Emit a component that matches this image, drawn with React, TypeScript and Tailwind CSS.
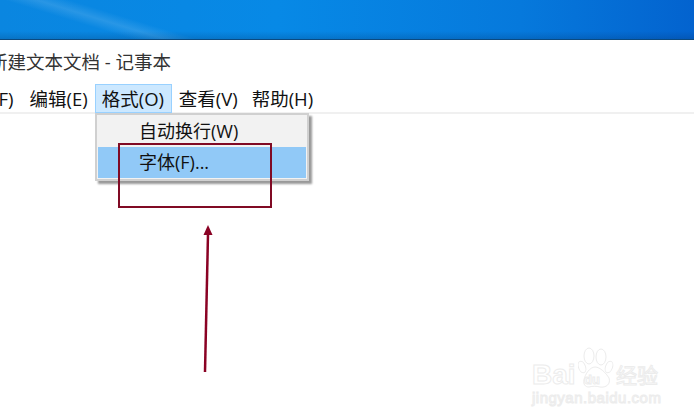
function Watermark() {
  return (
    <div className="absolute left-[532px] top-[345px] w-[126px] flex flex-col text-transparent [-webkit-text-stroke:1px_#ececec] font-['Liberation_Sans','Noto_Sans_CJK_SC',sans-serif]">
      <div className="flex items-end h-[44px]">
        <span className="text-[28px] leading-[28px] font-bold w-[46px]">Bai</span>
        <div className="relative w-[36px] h-[42px]">
          <svg width="36" height="42" viewBox="0 0 36 42" fill="none" stroke="#ececec" strokeWidth="1">
            <ellipse cx="11" cy="9" rx="5" ry="8" />
            <ellipse cx="23" cy="10" rx="5" ry="8" />
            <ellipse cx="4" cy="20" rx="3.5" ry="6" transform="rotate(-20 4 20)" />
            <ellipse cx="31" cy="20" rx="3.5" ry="6" transform="rotate(20 31 20)" />
            <path d="M6 33c1-6 6-13 11-13s11 6 14 11c2 6-3 10-9 9-4-1-7-1-11 0-4 0-6-3-5-7z" />
          </svg>
          <span className="absolute left-[6px] top-[26px] text-[13px] leading-none font-bold">du</span>
        </div>
        <span className="text-[21px] leading-[26px] ml-[2px] whitespace-nowrap">经验</span>
      </div>
      <span className="text-[15px] leading-[16px] mt-[1px] tracking-[0.5px] whitespace-nowrap">jingyan.baidu.com</span>
    </div>
  );
}

function App() {
  return (
    <div className="relative w-[694px] h-[420px] overflow-hidden bg-white text-[#111] text-[18.5px] font-['Open_Sans','Noto_Sans_CJK_SC',sans-serif]">
      <div className="h-[40px] border-b border-[#0b4a80] bg-[linear-gradient(180deg,transparent_80%,rgba(0,40,90,0.2)_100%),linear-gradient(197deg,transparent_76%,rgba(255,255,255,0.13)_80%,transparent_84%),linear-gradient(90deg,#0a86e0_0%,#0789e6_40%,#0679dc_75%,#0363cf_100%)]" />

      <div className="h-[44px] flex items-center -ml-[11px] text-[#333] whitespace-nowrap">新建文本文档 - 记事本</div>

      <div className="h-[30px] border-b-2 border-[#f0f0f0] flex items-start gap-[1px] -ml-[51px] whitespace-nowrap">
        <span className="h-[29px] px-[7px] flex items-center">文件(F)</span>
        <span className="h-[29px] pl-[8px] pr-[6px] flex items-center">编辑(E)</span>
        <span className="h-[29px] w-[77px] px-[6px] flex items-center bg-[#cce8ff] border border-[#99d1ff]">格式(O)</span>
        <span className="h-[29px] px-[6px] flex items-center">查看(V)</span>
        <span className="h-[29px] px-[7px] flex items-center">帮助(H)</span>
      </div>

      <div className="absolute left-[95px] top-[113px] w-[214px] h-[68px] bg-[#f2f2f2] border-2 border-[#d0d0d0] shadow-[3px_3px_2px_#999] p-[1px] flex flex-col whitespace-nowrap text-[18px]">
        <div className="h-[31px] pl-[41px] flex items-center">自动换行(W)</div>
        <div className="h-[31px] pl-[41px] flex items-center bg-[#91c9f7]">字体(F)...</div>
      </div>

      <div className="absolute left-[118px] top-[143px] w-[154px] h-[65px] border-2 border-[#800a24]" />

      <svg className="absolute left-[195px] top-[220px]" width="24" height="156" viewBox="0 0 24 156" fill="none">
        <path d="M10 152L13 14" stroke="#8a0224" strokeWidth="2.5" />
        <path d="M13 5L8.5 15H17.5Z" fill="#8a0224" />
      </svg>

      <Watermark />
    </div>
  );
}

export default App;
